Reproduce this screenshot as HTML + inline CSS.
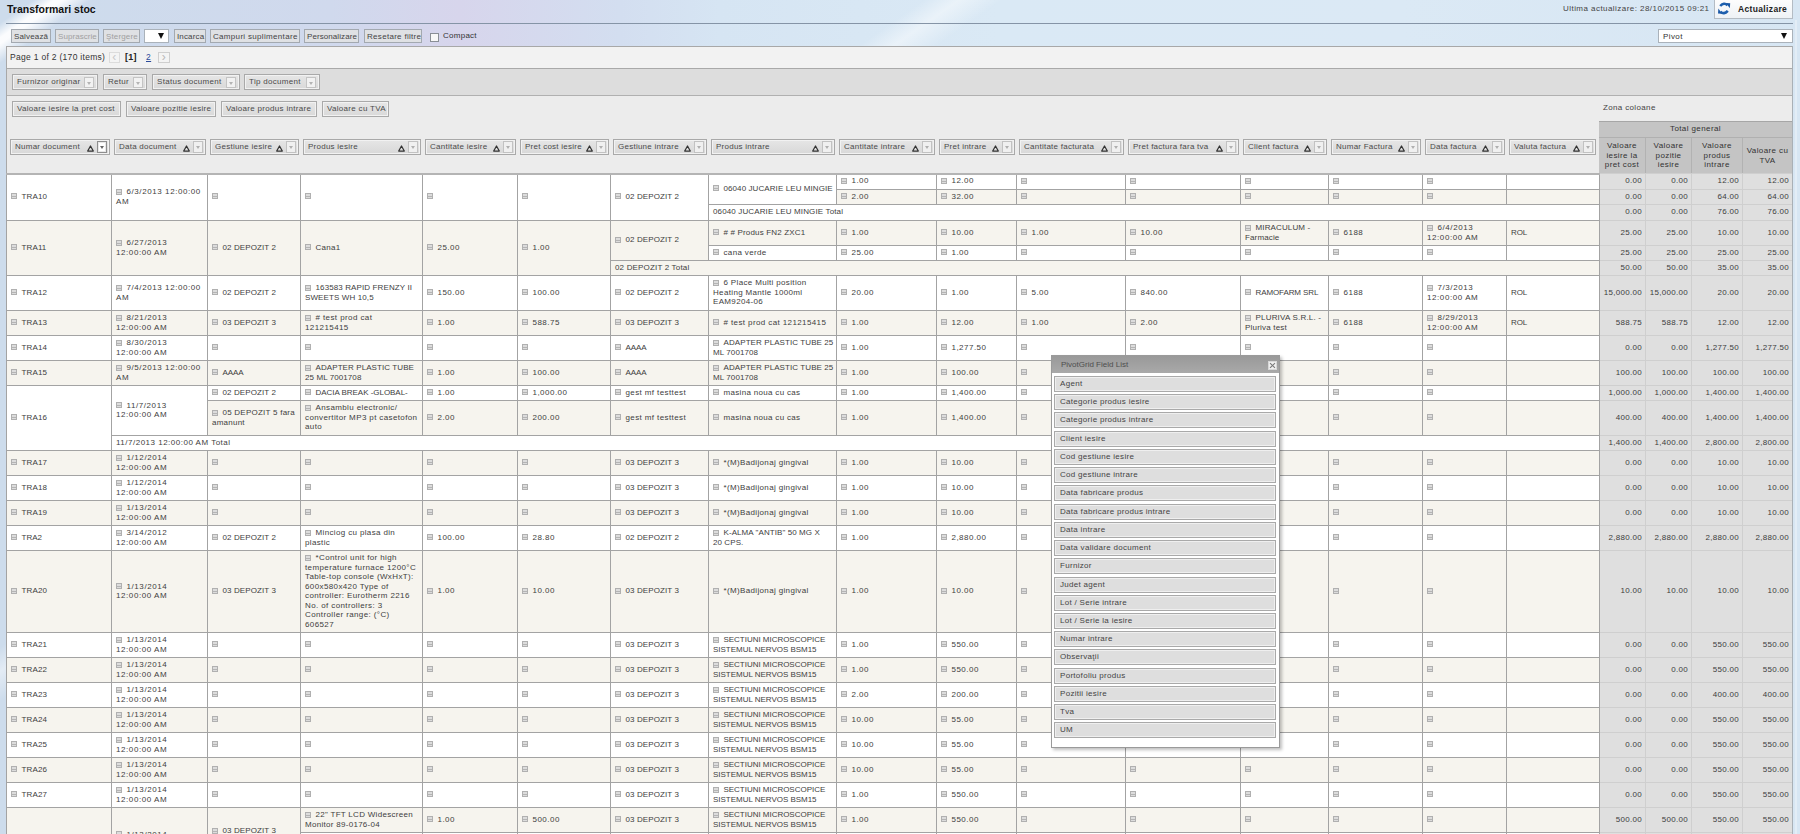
<!DOCTYPE html>
<html><head><meta charset="utf-8">
<style>
*{margin:0;padding:0;box-sizing:border-box}
html,body{width:1800px;height:834px;overflow:hidden}
body{position:relative;font-family:"Liberation Sans",sans-serif;color:#333;font-size:8px;letter-spacing:0.4px;
background:linear-gradient(145deg,rgba(255,255,255,0) 19px,rgba(255,255,255,0.92) 31px,rgba(255,255,255,0.92) 36px,rgba(255,255,255,0) 52px),linear-gradient(145deg,rgba(255,255,255,0) 530px,rgba(255,255,255,0.45) 550px,rgba(255,255,255,0) 575px),linear-gradient(90deg,#cddcec 0,#d0d9ed 330px,#d7d5ec 460px,#d3def0 620px,#d6e5f3 720px,#dae9f5 1000px,#dbe9f5 1400px,#d7e6f3 1800px)}
.abs{position:absolute}
#title{position:absolute;left:7px;top:3px;font-size:10.5px;font-weight:bold;color:#111;letter-spacing:0}
#tline{position:absolute;left:6px;top:23px;width:1787px;height:1px;background:#8594a6}
.tb{position:absolute;top:29px;height:14px;border:1px solid #a3a9b0;background:#dfe1e4;font-size:8px;line-height:13px;padding-left:2px;color:#444;white-space:nowrap;letter-spacing:0.12px;overflow:hidden}
.tb.dis{color:#a0a0a0}
#panel{position:absolute;left:6px;top:46px;width:1787px;height:800px;border:1px solid #a8a8a8;background:#ececec}
#pager{position:absolute;left:7px;top:47px;width:1785px;height:22px;background:#f2f2f2;border-bottom:1px solid #a9a9a9}
#filter{position:absolute;left:7px;top:69px;width:1785px;height:27px;background:#dddddd;border-bottom:1px solid #b0b0b0}
.fb{position:absolute;height:16px;border:1px solid #a9a9a9;background:linear-gradient(#e6e6e6,#d9d9d9);box-shadow:inset 0 0 0 1px #f2f2f2;font-size:8px;line-height:14px;padding-left:4px;white-space:nowrap;color:#4a4a4a;letter-spacing:0.3px}
.dd{position:absolute;right:3px;top:2px;width:10px;height:11px;border:1px solid #c4c4c4;background:#f2f2f2}
.dd:after{content:"";position:absolute;left:2px;top:4px;border-left:2.5px solid transparent;border-right:2.5px solid transparent;border-top:3px solid #b4b4b4}
.hb{position:absolute;top:139px;height:16px;border:1px solid #a9a9a9;background:linear-gradient(#e6e6e6,#d8d8d8);box-shadow:inset 0 0 0 1px #f2f2f2;font-size:8px;line-height:14px;padding-left:4px;white-space:nowrap;color:#4a4a4a;letter-spacing:0.25px}
.hb .dd{top:1px;height:12px;right:2px;width:10px;border-color:#c2c2c2;background:#f0f0f0}
.hb .dd:after{left:2px;top:4px;border-top-color:#b0b0b0}
.hb .dd.dk{border-color:#8e8e8e;background:#fff;box-shadow:inset 0 0 0 1px #e8e8e8}
.hb .dd.dk:after{border-top-color:#666;border-left-width:2.5px;border-right-width:2.5px;border-top-width:3px}
.hb .tri{right:15px;top:5px}
.tri{position:absolute;right:15px;top:4px;width:7px;height:7px}
#grid{position:absolute;left:6px;top:173px;width:1594px;height:661px;background:#a3a3a3}
#gtop{position:absolute;left:6px;top:173px;width:1594px;height:2px;background:#b4b4b4}
#tgrid{position:absolute;left:1600px;top:173px;width:192px;height:661px;background:#cfcfcf}
.c{position:absolute;display:flex;align-items:center;padding-left:4px;padding-bottom:1px;white-space:nowrap;overflow:hidden;line-height:9.5px;font-size:8px;color:#404040}
.c i{display:inline-block;width:6px;height:6px;border:1px solid #b0b0b0;background:#dcdcdc;margin-right:4.5px;position:relative;top:0px;vertical-align:-0.5px}
.c i:after{content:"";position:absolute;left:0;top:2px;width:4px;height:1px;background:#b4b4b4}
.t{position:absolute;background:#dfdfdf;text-align:right;padding-right:3px;padding-bottom:2px;display:flex;align-items:center;justify-content:flex-end;font-size:8px;color:#3d3d3d;white-space:nowrap;letter-spacing:0.3px}
#tgh{position:absolute;left:1599px;top:121px;width:193px;height:52px;background:#c4c4c4;border-top:1px solid #a6a6a6}
.tgh1{position:absolute;left:1599px;top:121px;width:193px;height:17px;border-bottom:1px solid #b0b0b0;text-align:center;line-height:16px;font-size:8px;color:#333;letter-spacing:0.4px}
.tgc{position:absolute;top:138px;height:35px;display:flex;align-items:center;justify-content:center;text-align:center;line-height:9.5px;font-size:8px;color:#333;border-right:1px solid #b2b2b2}
#popup{position:absolute;left:1051px;top:355px;width:229px;height:393px;background:#fff;border:1px solid #9a9a9a;box-shadow:2px 2px 3px rgba(0,0,0,0.25)}
#ptitle{position:absolute;left:0;top:0;width:227px;height:17px;background:linear-gradient(#999,#a9a9a9);color:#4e4e4e;font-size:8px;line-height:17px;padding-left:9px;letter-spacing:0}
#pclose{position:absolute;left:216px;top:5px;width:9px;height:9px;border:1px solid #d8d8d8;background:#f0f0f0}
#pclose:before,#pclose:after{content:"";position:absolute;left:0px;top:3px;width:7px;height:1px;background:#777;transform:rotate(45deg)}
#pclose:after{transform:rotate(-45deg)}
.pi{position:absolute;left:2px;width:222px;height:16px;border:1px solid #a9a9a9;background:#dedede;box-shadow:inset 0 0 0 1px #efefef;font-size:8px;line-height:14px;padding-left:5px;color:#444;letter-spacing:0.3px}
</style></head><body>
<div id="title">Transformari stoc</div>
<div id="tline"></div>
<div class="abs" style="left:1563px;top:4px;font-size:8px;color:#444;letter-spacing:0.45px;white-space:nowrap">Ultima actualizare: 28/10/2015 09:21</div>
<div class="abs" style="left:1714px;top:0px;width:79px;height:19px;background:linear-gradient(#fdfdfd,#eef2f6);border:1px solid #b4bcc4;border-top:none"></div>
<svg class="abs" style="left:1716px;top:0px" width="16" height="16" viewBox="0 0 16 16"><path d="M4.2 6 Q8 1.8 11.6 5.2" fill="none" stroke="#1d5fae" stroke-width="2.6"/><path d="M10 3 L14.2 3.2 L13.8 8.3 Z" fill="#1a58a6"/><path d="M11.8 10.8 Q8 15 4.4 11.6" fill="none" stroke="#1d5fae" stroke-width="2.6"/><path d="M6 13.8 L2.0 13.6 L2.4 8.6 Z" fill="#1a58a6"/></svg>
<div class="abs" style="left:1738px;top:4px;font-size:8.5px;font-weight:bold;color:#222;letter-spacing:0.35px">Actualizare</div>

<div class="tb" style="left:11px;width:40px;letter-spacing:0.16px">Salvează</div>
<div class="tb dis" style="left:55px;width:44px;letter-spacing:0.06px">Suprascrie</div>
<div class="tb dis" style="left:103px;width:37px;letter-spacing:0.14px">Ştergere</div>
<div class="abs" style="left:144px;top:29px;width:25px;height:14px;background:#fff;border:1px solid #aab2ba"></div>
<div class="abs" style="left:158px;top:33px;border-left:3px solid transparent;border-right:3px solid transparent;border-top:6px solid #111"></div>
<div class="tb" style="left:174px;width:32px;letter-spacing:0.15px">Incarca</div>
<div class="tb" style="left:210px;width:90px;letter-spacing:0.32px">Campuri suplimentare</div>
<div class="tb" style="left:304px;width:55px;letter-spacing:0.08px">Personalizare</div>
<div class="tb" style="left:364px;width:58px;letter-spacing:0.3px">Resetare filtre</div>
<div class="abs" style="left:430px;top:33px;width:9px;height:9px;border:1px solid #8a8f96;background:#f8f8f8"></div>
<div class="abs" style="left:443px;top:31px;font-size:8px;color:#333;letter-spacing:0.26px">Compact</div>
<div class="abs" style="left:1658px;top:29px;width:135px;height:14px;background:#fff;border:1px solid #aab2ba;font-size:8px;line-height:13px;padding-left:4px;color:#333">Pivot</div>
<div class="abs" style="left:1781px;top:33px;border-left:3px solid transparent;border-right:3px solid transparent;border-top:6px solid #111"></div>

<div id="panel"></div>
<div id="pager"></div>
<div class="abs" style="left:10px;top:52px;font-size:8.5px;color:#333;letter-spacing:0.3px;white-space:nowrap">Page 1 of 2 (170 items)</div>
<div class="abs" style="left:109px;top:52px;width:11px;height:11px;border:1px solid #dcdcdc;background:#f4f4f4;color:#c8c8c8;font-size:12px;line-height:9px;text-align:center">&lsaquo;</div>
<div class="abs" style="left:125px;top:52px;font-size:9px;font-weight:bold;color:#222;letter-spacing:0.3px">[1]</div>
<div class="abs" style="left:146px;top:52px;font-size:8.5px;color:#2a4a9a;text-decoration:underline">2</div>
<div class="abs" style="left:158px;top:52px;width:12px;height:11px;border:1px solid #cfcfcf;background:#f4f4f4;color:#b8b8b8;font-size:12px;line-height:9px;text-align:center">&rsaquo;</div>

<div id="filter"></div>
<div class="fb" style="left:12px;top:74px;width:86px">Furnizor originar<span class="dd"></span></div>
<div class="fb" style="left:103px;top:74px;width:44px">Retur<span class="dd"></span></div>
<div class="fb" style="left:152px;top:74px;width:88px">Status document<span class="dd"></span></div>
<div class="fb" style="left:244px;top:74px;width:76px">Tip document<span class="dd"></span></div>

<div class="fb" style="left:12px;top:101px;width:109px">Valoare iesire la pret cost</div>
<div class="fb" style="left:126px;top:101px;width:90px">Valoare pozitie iesire</div>
<div class="fb" style="left:221px;top:101px;width:96px">Valoare produs intrare</div>
<div class="fb" style="left:322px;top:101px;width:67px">Valoare cu TVA</div>
<div class="abs" style="left:1603px;top:103px;font-size:8px;color:#444;letter-spacing:0.35px">Zona coloane</div>

<div class="hb" style="left:10px;width:100px"><span class="ht">Numar document</span><svg class="tri" width="7" height="7"><path d="M3.5 1.0 L6.3 6.0 L0.7 6.0 Z" fill="none" stroke="#333" stroke-width="1.25" stroke-linejoin="round"/></svg><span class="dd dk"></span></div>
<div class="hb" style="left:114px;width:92px"><span class="ht">Data document</span><svg class="tri" width="7" height="7"><path d="M3.5 1.0 L6.3 6.0 L0.7 6.0 Z" fill="none" stroke="#333" stroke-width="1.25" stroke-linejoin="round"/></svg><span class="dd"></span></div>
<div class="hb" style="left:210px;width:89px"><span class="ht">Gestiune iesire</span><svg class="tri" width="7" height="7"><path d="M3.5 1.0 L6.3 6.0 L0.7 6.0 Z" fill="none" stroke="#333" stroke-width="1.25" stroke-linejoin="round"/></svg><span class="dd"></span></div>
<div class="hb" style="left:303px;width:118px"><span class="ht">Produs iesire</span><svg class="tri" width="7" height="7"><path d="M3.5 1.0 L6.3 6.0 L0.7 6.0 Z" fill="none" stroke="#333" stroke-width="1.25" stroke-linejoin="round"/></svg><span class="dd"></span></div>
<div class="hb" style="left:425px;width:91px"><span class="ht">Cantitate iesire</span><svg class="tri" width="7" height="7"><path d="M3.5 1.0 L6.3 6.0 L0.7 6.0 Z" fill="none" stroke="#333" stroke-width="1.25" stroke-linejoin="round"/></svg><span class="dd"></span></div>
<div class="hb" style="left:520px;width:89px"><span class="ht">Pret cost iesire</span><svg class="tri" width="7" height="7"><path d="M3.5 1.0 L6.3 6.0 L0.7 6.0 Z" fill="none" stroke="#333" stroke-width="1.25" stroke-linejoin="round"/></svg><span class="dd"></span></div>
<div class="hb" style="left:613px;width:94px"><span class="ht">Gestiune intrare</span><svg class="tri" width="7" height="7"><path d="M3.5 1.0 L6.3 6.0 L0.7 6.0 Z" fill="none" stroke="#333" stroke-width="1.25" stroke-linejoin="round"/></svg><span class="dd"></span></div>
<div class="hb" style="left:711px;width:124px"><span class="ht">Produs intrare</span><svg class="tri" width="7" height="7"><path d="M3.5 1.0 L6.3 6.0 L0.7 6.0 Z" fill="none" stroke="#333" stroke-width="1.25" stroke-linejoin="round"/></svg><span class="dd"></span></div>
<div class="hb" style="left:839px;width:96px"><span class="ht">Cantitate intrare</span><svg class="tri" width="7" height="7"><path d="M3.5 1.0 L6.3 6.0 L0.7 6.0 Z" fill="none" stroke="#333" stroke-width="1.25" stroke-linejoin="round"/></svg><span class="dd"></span></div>
<div class="hb" style="left:939px;width:76px"><span class="ht">Pret intrare</span><svg class="tri" width="7" height="7"><path d="M3.5 1.0 L6.3 6.0 L0.7 6.0 Z" fill="none" stroke="#333" stroke-width="1.25" stroke-linejoin="round"/></svg><span class="dd"></span></div>
<div class="hb" style="left:1019px;width:105px"><span class="ht">Cantitate facturata</span><svg class="tri" width="7" height="7"><path d="M3.5 1.0 L6.3 6.0 L0.7 6.0 Z" fill="none" stroke="#333" stroke-width="1.25" stroke-linejoin="round"/></svg><span class="dd"></span></div>
<div class="hb" style="left:1128px;width:111px"><span class="ht">Pret factura fara tva</span><svg class="tri" width="7" height="7"><path d="M3.5 1.0 L6.3 6.0 L0.7 6.0 Z" fill="none" stroke="#333" stroke-width="1.25" stroke-linejoin="round"/></svg><span class="dd"></span></div>
<div class="hb" style="left:1243px;width:84px"><span class="ht">Client factura</span><svg class="tri" width="7" height="7"><path d="M3.5 1.0 L6.3 6.0 L0.7 6.0 Z" fill="none" stroke="#333" stroke-width="1.25" stroke-linejoin="round"/></svg><span class="dd"></span></div>
<div class="hb" style="left:1331px;width:90px"><span class="ht">Numar Factura</span><svg class="tri" width="7" height="7"><path d="M3.5 1.0 L6.3 6.0 L0.7 6.0 Z" fill="none" stroke="#333" stroke-width="1.25" stroke-linejoin="round"/></svg><span class="dd"></span></div>
<div class="hb" style="left:1425px;width:80px"><span class="ht">Data factura</span><svg class="tri" width="7" height="7"><path d="M3.5 1.0 L6.3 6.0 L0.7 6.0 Z" fill="none" stroke="#333" stroke-width="1.25" stroke-linejoin="round"/></svg><span class="dd"></span></div>
<div class="hb" style="left:1509px;width:87px"><span class="ht">Valuta factura</span><svg class="tri" width="7" height="7"><path d="M3.5 1.0 L6.3 6.0 L0.7 6.0 Z" fill="none" stroke="#333" stroke-width="1.25" stroke-linejoin="round"/></svg><span class="dd"></span></div>

<div id="tgh"></div>
<div class="tgh1">Total general</div>
<div class="tgc" style="left:1599px;width:47px">Valoare<br>iesire la<br>pret cost</div>
<div class="tgc" style="left:1646px;width:46px">Valoare<br>pozitie<br>iesire</div>
<div class="tgc" style="left:1692px;width:51px">Valoare<br>produs<br>intrare</div>
<div class="tgc" style="left:1743px;width:49px;border-right:none">Valoare cu<br>TVA</div>

<div id="grid"></div>
<div id="tgrid"></div>
<div class="c" style="left:7px;top:174px;width:104px;height:46px;background:#ffffff;letter-spacing:0.128px"><span><i></i>TRA10</span></div>
<div class="c" style="left:112px;top:174px;width:95px;height:46px;background:#ffffff;letter-spacing:0.582px"><span><i></i>6/3/2013 12:00:00<br>AM</span></div>
<div class="c" style="left:208px;top:174px;width:92px;height:46px;background:#ffffff;letter-spacing:0.4px"><span><i></i></span></div>
<div class="c" style="left:301px;top:174px;width:121px;height:46px;background:#ffffff;letter-spacing:0.4px"><span><i></i></span></div>
<div class="c" style="left:423px;top:174px;width:94px;height:46px;background:#ffffff;letter-spacing:0.4px"><span><i></i></span></div>
<div class="c" style="left:518px;top:174px;width:92px;height:46px;background:#ffffff;letter-spacing:0.4px"><span><i></i></span></div>
<div class="c" style="left:611px;top:174px;width:97px;height:46px;background:#ffffff;letter-spacing:0.107px"><span><i></i>02 DEPOZIT 2</span></div>
<div class="c" style="left:709px;top:174px;width:127px;height:30px;background:#ffffff;letter-spacing:0.089px"><span><i></i>06040 JUCARIE LEU MINGIE</span></div>
<div class="c" style="left:837px;top:174px;width:99px;height:15px;background:#ffffff;letter-spacing:0.475px"><span><i></i>1.00</span></div>
<div class="c" style="left:837px;top:190px;width:99px;height:14px;background:#f6f4ee;letter-spacing:0.475px"><span><i></i>2.00</span></div>
<div class="c" style="left:937px;top:174px;width:79px;height:15px;background:#ffffff;letter-spacing:0.48px"><span><i></i>12.00</span></div>
<div class="c" style="left:937px;top:190px;width:79px;height:14px;background:#f6f4ee;letter-spacing:0.48px"><span><i></i>32.00</span></div>
<div class="c" style="left:1017px;top:174px;width:108px;height:15px;background:#ffffff;letter-spacing:0.4px"><span><i></i></span></div>
<div class="c" style="left:1017px;top:190px;width:108px;height:14px;background:#f6f4ee;letter-spacing:0.4px"><span><i></i></span></div>
<div class="c" style="left:1126px;top:174px;width:114px;height:15px;background:#ffffff;letter-spacing:0.4px"><span><i></i></span></div>
<div class="c" style="left:1126px;top:190px;width:114px;height:14px;background:#f6f4ee;letter-spacing:0.4px"><span><i></i></span></div>
<div class="c" style="left:1241px;top:174px;width:87px;height:15px;background:#ffffff;letter-spacing:0.4px"><span><i></i></span></div>
<div class="c" style="left:1241px;top:190px;width:87px;height:14px;background:#f6f4ee;letter-spacing:0.4px"><span><i></i></span></div>
<div class="c" style="left:1329px;top:174px;width:93px;height:15px;background:#ffffff;letter-spacing:0.4px"><span><i></i></span></div>
<div class="c" style="left:1329px;top:190px;width:93px;height:14px;background:#f6f4ee;letter-spacing:0.4px"><span><i></i></span></div>
<div class="c" style="left:1423px;top:174px;width:83px;height:15px;background:#ffffff;letter-spacing:0.4px"><span><i></i></span></div>
<div class="c" style="left:1423px;top:190px;width:83px;height:14px;background:#f6f4ee;letter-spacing:0.4px"><span><i></i></span></div>
<div class="c" style="left:1507px;top:174px;width:92px;height:15px;background:#ffffff;letter-spacing:0.4px"><span></span></div>
<div class="c" style="left:1507px;top:190px;width:92px;height:14px;background:#f6f4ee;letter-spacing:0.4px"><span></span></div>
<div class="c" style="left:709px;top:205px;width:890px;height:15px;background:#ffffff;letter-spacing:0.131px"><span>06040 JUCARIE LEU MINGIE Total</span></div>
<div class="t" style="left:1600px;top:174px;width:45px;height:15px">0.00</div>
<div class="t" style="left:1646px;top:174px;width:45px;height:15px">0.00</div>
<div class="t" style="left:1692px;top:174px;width:50px;height:15px">12.00</div>
<div class="t" style="left:1743px;top:174px;width:49px;height:15px">12.00</div>
<div class="t" style="left:1600px;top:190px;width:45px;height:14px">0.00</div>
<div class="t" style="left:1646px;top:190px;width:45px;height:14px">0.00</div>
<div class="t" style="left:1692px;top:190px;width:50px;height:14px">64.00</div>
<div class="t" style="left:1743px;top:190px;width:49px;height:14px">64.00</div>
<div class="t" style="left:1600px;top:205px;width:45px;height:15px">0.00</div>
<div class="t" style="left:1646px;top:205px;width:45px;height:15px">0.00</div>
<div class="t" style="left:1692px;top:205px;width:50px;height:15px">76.00</div>
<div class="t" style="left:1743px;top:205px;width:49px;height:15px">76.00</div>
<div class="c" style="left:7px;top:221px;width:104px;height:54px;background:#f6f4ee;letter-spacing:0.128px"><span><i></i>TRA11</span></div>
<div class="c" style="left:112px;top:221px;width:95px;height:54px;background:#f6f4ee;letter-spacing:0.578px"><span><i></i>6/27/2013<br>12:00:00 AM</span></div>
<div class="c" style="left:208px;top:221px;width:92px;height:54px;background:#f6f4ee;letter-spacing:0.107px"><span><i></i>02 DEPOZIT 2</span></div>
<div class="c" style="left:301px;top:221px;width:121px;height:54px;background:#f6f4ee;letter-spacing:0.286px"><span><i></i>Cana1</span></div>
<div class="c" style="left:423px;top:221px;width:94px;height:54px;background:#f6f4ee;letter-spacing:0.48px"><span><i></i>25.00</span></div>
<div class="c" style="left:518px;top:221px;width:92px;height:54px;background:#f6f4ee;letter-spacing:0.475px"><span><i></i>1.00</span></div>
<div class="c" style="left:611px;top:221px;width:97px;height:39px;background:#f6f4ee;letter-spacing:0.107px"><span><i></i>02 DEPOZIT 2</span></div>
<div class="c" style="left:709px;top:221px;width:127px;height:24px;background:#f6f4ee;letter-spacing:0.17px"><span><i></i># # Produs FN2 ZXC1</span></div>
<div class="c" style="left:709px;top:246px;width:127px;height:14px;background:#ffffff;letter-spacing:0.345px"><span><i></i>cana verde</span></div>
<div class="c" style="left:837px;top:221px;width:99px;height:24px;background:#f6f4ee;letter-spacing:0.475px"><span><i></i>1.00</span></div>
<div class="c" style="left:837px;top:246px;width:99px;height:14px;background:#ffffff;letter-spacing:0.48px"><span><i></i>25.00</span></div>
<div class="c" style="left:937px;top:221px;width:79px;height:24px;background:#f6f4ee;letter-spacing:0.48px"><span><i></i>10.00</span></div>
<div class="c" style="left:937px;top:246px;width:79px;height:14px;background:#ffffff;letter-spacing:0.475px"><span><i></i>1.00</span></div>
<div class="c" style="left:1017px;top:221px;width:108px;height:24px;background:#f6f4ee;letter-spacing:0.475px"><span><i></i>1.00</span></div>
<div class="c" style="left:1017px;top:246px;width:108px;height:14px;background:#ffffff;letter-spacing:0.4px"><span><i></i></span></div>
<div class="c" style="left:1126px;top:221px;width:114px;height:24px;background:#f6f4ee;letter-spacing:0.48px"><span><i></i>10.00</span></div>
<div class="c" style="left:1126px;top:246px;width:114px;height:14px;background:#ffffff;letter-spacing:0.4px"><span><i></i></span></div>
<div class="c" style="left:1241px;top:221px;width:87px;height:24px;background:#f6f4ee;letter-spacing:0.13px"><span><i></i>MIRACULUM -<br>Farmacie</span></div>
<div class="c" style="left:1241px;top:246px;width:87px;height:14px;background:#ffffff;letter-spacing:0.4px"><span><i></i></span></div>
<div class="c" style="left:1329px;top:221px;width:93px;height:24px;background:#f6f4ee;letter-spacing:0.5px"><span><i></i>6188</span></div>
<div class="c" style="left:1329px;top:246px;width:93px;height:14px;background:#ffffff;letter-spacing:0.4px"><span><i></i></span></div>
<div class="c" style="left:1423px;top:221px;width:83px;height:24px;background:#f6f4ee;letter-spacing:0.582px"><span><i></i>6/4/2013<br>12:00:00 AM</span></div>
<div class="c" style="left:1423px;top:246px;width:83px;height:14px;background:#ffffff;letter-spacing:0.4px"><span><i></i></span></div>
<div class="c" style="left:1507px;top:221px;width:92px;height:24px;background:#f6f4ee;letter-spacing:-0.12px"><span>ROL</span></div>
<div class="c" style="left:1507px;top:246px;width:92px;height:14px;background:#ffffff;letter-spacing:0.4px"><span></span></div>
<div class="c" style="left:611px;top:261px;width:988px;height:14px;background:#f6f4ee;letter-spacing:0.17px"><span>02 DEPOZIT 2 Total</span></div>
<div class="t" style="left:1600px;top:221px;width:45px;height:24px">25.00</div>
<div class="t" style="left:1646px;top:221px;width:45px;height:24px">25.00</div>
<div class="t" style="left:1692px;top:221px;width:50px;height:24px">10.00</div>
<div class="t" style="left:1743px;top:221px;width:49px;height:24px">10.00</div>
<div class="t" style="left:1600px;top:246px;width:45px;height:14px">25.00</div>
<div class="t" style="left:1646px;top:246px;width:45px;height:14px">25.00</div>
<div class="t" style="left:1692px;top:246px;width:50px;height:14px">25.00</div>
<div class="t" style="left:1743px;top:246px;width:49px;height:14px">25.00</div>
<div class="t" style="left:1600px;top:261px;width:45px;height:14px">50.00</div>
<div class="t" style="left:1646px;top:261px;width:45px;height:14px">50.00</div>
<div class="t" style="left:1692px;top:261px;width:50px;height:14px">35.00</div>
<div class="t" style="left:1743px;top:261px;width:49px;height:14px">35.00</div>
<div class="c" style="left:7px;top:276px;width:104px;height:34px;background:#ffffff;letter-spacing:0.128px"><span><i></i>TRA12</span></div>
<div class="c" style="left:112px;top:276px;width:95px;height:34px;background:#ffffff;letter-spacing:0.582px"><span><i></i>7/4/2013 12:00:00<br>AM</span></div>
<div class="c" style="left:208px;top:276px;width:92px;height:34px;background:#ffffff;letter-spacing:0.107px"><span><i></i>02 DEPOZIT 2</span></div>
<div class="c" style="left:301px;top:276px;width:121px;height:34px;background:#ffffff;letter-spacing:0.115px"><span><i></i>163583 RAPID FRENZY II<br>SWEETS WH 10,5</span></div>
<div class="c" style="left:423px;top:276px;width:94px;height:34px;background:#ffffff;letter-spacing:0.483px"><span><i></i>150.00</span></div>
<div class="c" style="left:518px;top:276px;width:92px;height:34px;background:#ffffff;letter-spacing:0.483px"><span><i></i>100.00</span></div>
<div class="c" style="left:611px;top:276px;width:97px;height:34px;background:#ffffff;letter-spacing:0.107px"><span><i></i>02 DEPOZIT 2</span></div>
<div class="c" style="left:709px;top:276px;width:127px;height:34px;background:#ffffff;letter-spacing:0.34px"><span><i></i>6 Place Multi position<br>Heating Mantle 1000ml<br>EAM9204-06</span></div>
<div class="c" style="left:837px;top:276px;width:99px;height:34px;background:#ffffff;letter-spacing:0.48px"><span><i></i>20.00</span></div>
<div class="c" style="left:937px;top:276px;width:79px;height:34px;background:#ffffff;letter-spacing:0.475px"><span><i></i>1.00</span></div>
<div class="c" style="left:1017px;top:276px;width:108px;height:34px;background:#ffffff;letter-spacing:0.475px"><span><i></i>5.00</span></div>
<div class="c" style="left:1126px;top:276px;width:114px;height:34px;background:#ffffff;letter-spacing:0.483px"><span><i></i>840.00</span></div>
<div class="c" style="left:1241px;top:276px;width:87px;height:34px;background:#ffffff;letter-spacing:-0.102px"><span><i></i>RAMOFARM SRL</span></div>
<div class="c" style="left:1329px;top:276px;width:93px;height:34px;background:#ffffff;letter-spacing:0.5px"><span><i></i>6188</span></div>
<div class="c" style="left:1423px;top:276px;width:83px;height:34px;background:#ffffff;letter-spacing:0.582px"><span><i></i>7/3/2013<br>12:00:00 AM</span></div>
<div class="c" style="left:1507px;top:276px;width:92px;height:34px;background:#ffffff;letter-spacing:-0.12px"><span>ROL</span></div>
<div class="t" style="left:1600px;top:276px;width:45px;height:34px">15,000.00</div>
<div class="t" style="left:1646px;top:276px;width:45px;height:34px">15,000.00</div>
<div class="t" style="left:1692px;top:276px;width:50px;height:34px">20.00</div>
<div class="t" style="left:1743px;top:276px;width:49px;height:34px">20.00</div>
<div class="c" style="left:7px;top:311px;width:104px;height:24px;background:#f6f4ee;letter-spacing:0.128px"><span><i></i>TRA13</span></div>
<div class="c" style="left:112px;top:311px;width:95px;height:24px;background:#f6f4ee;letter-spacing:0.578px"><span><i></i>8/21/2013<br>12:00:00 AM</span></div>
<div class="c" style="left:208px;top:311px;width:92px;height:24px;background:#f6f4ee;letter-spacing:0.107px"><span><i></i>03 DEPOZIT 3</span></div>
<div class="c" style="left:301px;top:311px;width:121px;height:24px;background:#f6f4ee;letter-spacing:0.406px"><span><i></i># test prod cat<br>121215415</span></div>
<div class="c" style="left:423px;top:311px;width:94px;height:24px;background:#f6f4ee;letter-spacing:0.475px"><span><i></i>1.00</span></div>
<div class="c" style="left:518px;top:311px;width:92px;height:24px;background:#f6f4ee;letter-spacing:0.483px"><span><i></i>588.75</span></div>
<div class="c" style="left:611px;top:311px;width:97px;height:24px;background:#f6f4ee;letter-spacing:0.107px"><span><i></i>03 DEPOZIT 3</span></div>
<div class="c" style="left:709px;top:311px;width:127px;height:24px;background:#f6f4ee;letter-spacing:0.394px"><span><i></i># test prod cat 121215415</span></div>
<div class="c" style="left:837px;top:311px;width:99px;height:24px;background:#f6f4ee;letter-spacing:0.475px"><span><i></i>1.00</span></div>
<div class="c" style="left:937px;top:311px;width:79px;height:24px;background:#f6f4ee;letter-spacing:0.48px"><span><i></i>12.00</span></div>
<div class="c" style="left:1017px;top:311px;width:108px;height:24px;background:#f6f4ee;letter-spacing:0.475px"><span><i></i>1.00</span></div>
<div class="c" style="left:1126px;top:311px;width:114px;height:24px;background:#f6f4ee;letter-spacing:0.475px"><span><i></i>2.00</span></div>
<div class="c" style="left:1241px;top:311px;width:87px;height:24px;background:#f6f4ee;letter-spacing:0.193px"><span><i></i>PLURIVA S.R.L. -<br>Pluriva test</span></div>
<div class="c" style="left:1329px;top:311px;width:93px;height:24px;background:#f6f4ee;letter-spacing:0.5px"><span><i></i>6188</span></div>
<div class="c" style="left:1423px;top:311px;width:83px;height:24px;background:#f6f4ee;letter-spacing:0.578px"><span><i></i>8/29/2013<br>12:00:00 AM</span></div>
<div class="c" style="left:1507px;top:311px;width:92px;height:24px;background:#f6f4ee;letter-spacing:-0.12px"><span>ROL</span></div>
<div class="t" style="left:1600px;top:311px;width:45px;height:24px">588.75</div>
<div class="t" style="left:1646px;top:311px;width:45px;height:24px">588.75</div>
<div class="t" style="left:1692px;top:311px;width:50px;height:24px">12.00</div>
<div class="t" style="left:1743px;top:311px;width:49px;height:24px">12.00</div>
<div class="c" style="left:7px;top:336px;width:104px;height:24px;background:#ffffff;letter-spacing:0.128px"><span><i></i>TRA14</span></div>
<div class="c" style="left:112px;top:336px;width:95px;height:24px;background:#ffffff;letter-spacing:0.578px"><span><i></i>8/30/2013<br>12:00:00 AM</span></div>
<div class="c" style="left:208px;top:336px;width:92px;height:24px;background:#ffffff;letter-spacing:0.4px"><span><i></i></span></div>
<div class="c" style="left:301px;top:336px;width:121px;height:24px;background:#ffffff;letter-spacing:0.4px"><span><i></i></span></div>
<div class="c" style="left:423px;top:336px;width:94px;height:24px;background:#ffffff;letter-spacing:0.4px"><span><i></i></span></div>
<div class="c" style="left:518px;top:336px;width:92px;height:24px;background:#ffffff;letter-spacing:0.4px"><span><i></i></span></div>
<div class="c" style="left:611px;top:336px;width:97px;height:24px;background:#ffffff;letter-spacing:-0.12px"><span><i></i>AAAA</span></div>
<div class="c" style="left:709px;top:336px;width:127px;height:24px;background:#ffffff;letter-spacing:0.088px"><span><i></i>ADAPTER PLASTIC TUBE 25<br>ML 7001708</span></div>
<div class="c" style="left:837px;top:336px;width:99px;height:24px;background:#ffffff;letter-spacing:0.475px"><span><i></i>1.00</span></div>
<div class="c" style="left:937px;top:336px;width:79px;height:24px;background:#ffffff;letter-spacing:0.475px"><span><i></i>1,277.50</span></div>
<div class="c" style="left:1017px;top:336px;width:108px;height:24px;background:#ffffff;letter-spacing:0.4px"><span><i></i></span></div>
<div class="c" style="left:1126px;top:336px;width:114px;height:24px;background:#ffffff;letter-spacing:0.4px"><span><i></i></span></div>
<div class="c" style="left:1241px;top:336px;width:87px;height:24px;background:#ffffff;letter-spacing:0.4px"><span><i></i></span></div>
<div class="c" style="left:1329px;top:336px;width:93px;height:24px;background:#ffffff;letter-spacing:0.4px"><span><i></i></span></div>
<div class="c" style="left:1423px;top:336px;width:83px;height:24px;background:#ffffff;letter-spacing:0.4px"><span><i></i></span></div>
<div class="c" style="left:1507px;top:336px;width:92px;height:24px;background:#ffffff;letter-spacing:0.4px"><span></span></div>
<div class="t" style="left:1600px;top:336px;width:45px;height:24px">0.00</div>
<div class="t" style="left:1646px;top:336px;width:45px;height:24px">0.00</div>
<div class="t" style="left:1692px;top:336px;width:50px;height:24px">1,277.50</div>
<div class="t" style="left:1743px;top:336px;width:49px;height:24px">1,277.50</div>
<div class="c" style="left:7px;top:361px;width:104px;height:24px;background:#f6f4ee;letter-spacing:0.128px"><span><i></i>TRA15</span></div>
<div class="c" style="left:112px;top:361px;width:95px;height:24px;background:#f6f4ee;letter-spacing:0.582px"><span><i></i>9/5/2013 12:00:00<br>AM</span></div>
<div class="c" style="left:208px;top:361px;width:92px;height:24px;background:#f6f4ee;letter-spacing:-0.12px"><span><i></i>AAAA</span></div>
<div class="c" style="left:301px;top:361px;width:121px;height:24px;background:#f6f4ee;letter-spacing:0.088px"><span><i></i>ADAPTER PLASTIC TUBE<br>25 ML 7001708</span></div>
<div class="c" style="left:423px;top:361px;width:94px;height:24px;background:#f6f4ee;letter-spacing:0.475px"><span><i></i>1.00</span></div>
<div class="c" style="left:518px;top:361px;width:92px;height:24px;background:#f6f4ee;letter-spacing:0.483px"><span><i></i>100.00</span></div>
<div class="c" style="left:611px;top:361px;width:97px;height:24px;background:#f6f4ee;letter-spacing:-0.12px"><span><i></i>AAAA</span></div>
<div class="c" style="left:709px;top:361px;width:127px;height:24px;background:#f6f4ee;letter-spacing:0.088px"><span><i></i>ADAPTER PLASTIC TUBE 25<br>ML 7001708</span></div>
<div class="c" style="left:837px;top:361px;width:99px;height:24px;background:#f6f4ee;letter-spacing:0.475px"><span><i></i>1.00</span></div>
<div class="c" style="left:937px;top:361px;width:79px;height:24px;background:#f6f4ee;letter-spacing:0.483px"><span><i></i>100.00</span></div>
<div class="c" style="left:1017px;top:361px;width:108px;height:24px;background:#f6f4ee;letter-spacing:0.4px"><span><i></i></span></div>
<div class="c" style="left:1126px;top:361px;width:114px;height:24px;background:#f6f4ee;letter-spacing:0.4px"><span><i></i></span></div>
<div class="c" style="left:1241px;top:361px;width:87px;height:24px;background:#f6f4ee;letter-spacing:0.4px"><span><i></i></span></div>
<div class="c" style="left:1329px;top:361px;width:93px;height:24px;background:#f6f4ee;letter-spacing:0.4px"><span><i></i></span></div>
<div class="c" style="left:1423px;top:361px;width:83px;height:24px;background:#f6f4ee;letter-spacing:0.4px"><span><i></i></span></div>
<div class="c" style="left:1507px;top:361px;width:92px;height:24px;background:#f6f4ee;letter-spacing:0.4px"><span></span></div>
<div class="t" style="left:1600px;top:361px;width:45px;height:24px">100.00</div>
<div class="t" style="left:1646px;top:361px;width:45px;height:24px">100.00</div>
<div class="t" style="left:1692px;top:361px;width:50px;height:24px">100.00</div>
<div class="t" style="left:1743px;top:361px;width:49px;height:24px">100.00</div>
<div class="c" style="left:7px;top:386px;width:104px;height:64px;background:#ffffff;letter-spacing:0.128px"><span><i></i>TRA16</span></div>
<div class="c" style="left:112px;top:386px;width:95px;height:49px;background:#ffffff;letter-spacing:0.578px"><span><i></i>11/7/2013<br>12:00:00 AM</span></div>
<div class="c" style="left:208px;top:386px;width:92px;height:14px;background:#ffffff;letter-spacing:0.107px"><span><i></i>02 DEPOZIT 2</span></div>
<div class="c" style="left:208px;top:401px;width:92px;height:34px;background:#f6f4ee;letter-spacing:0.243px"><span><i></i>05 DEPOZIT 5 fara<br>amanunt</span></div>
<div class="c" style="left:301px;top:386px;width:121px;height:14px;background:#ffffff;letter-spacing:-0.035px"><span><i></i>DACIA BREAK -GLOBAL-</span></div>
<div class="c" style="left:301px;top:401px;width:121px;height:34px;background:#f6f4ee;letter-spacing:0.379px"><span><i></i>Ansamblu electronic/<br>convertitor MP3 pt casetofon<br>auto</span></div>
<div class="c" style="left:423px;top:386px;width:94px;height:14px;background:#ffffff;letter-spacing:0.475px"><span><i></i>1.00</span></div>
<div class="c" style="left:423px;top:401px;width:94px;height:34px;background:#f6f4ee;letter-spacing:0.475px"><span><i></i>2.00</span></div>
<div class="c" style="left:518px;top:386px;width:92px;height:14px;background:#ffffff;letter-spacing:0.475px"><span><i></i>1,000.00</span></div>
<div class="c" style="left:518px;top:401px;width:92px;height:34px;background:#f6f4ee;letter-spacing:0.483px"><span><i></i>200.00</span></div>
<div class="c" style="left:611px;top:386px;width:97px;height:14px;background:#ffffff;letter-spacing:0.394px"><span><i></i>gest mf testtest</span></div>
<div class="c" style="left:611px;top:401px;width:97px;height:34px;background:#f6f4ee;letter-spacing:0.394px"><span><i></i>gest mf testtest</span></div>
<div class="c" style="left:709px;top:386px;width:127px;height:14px;background:#ffffff;letter-spacing:0.319px"><span><i></i>masina noua cu cas</span></div>
<div class="c" style="left:709px;top:401px;width:127px;height:34px;background:#f6f4ee;letter-spacing:0.319px"><span><i></i>masina noua cu cas</span></div>
<div class="c" style="left:837px;top:386px;width:99px;height:14px;background:#ffffff;letter-spacing:0.475px"><span><i></i>1.00</span></div>
<div class="c" style="left:837px;top:401px;width:99px;height:34px;background:#f6f4ee;letter-spacing:0.475px"><span><i></i>1.00</span></div>
<div class="c" style="left:937px;top:386px;width:79px;height:14px;background:#ffffff;letter-spacing:0.475px"><span><i></i>1,400.00</span></div>
<div class="c" style="left:937px;top:401px;width:79px;height:34px;background:#f6f4ee;letter-spacing:0.475px"><span><i></i>1,400.00</span></div>
<div class="c" style="left:1017px;top:386px;width:108px;height:14px;background:#ffffff;letter-spacing:0.4px"><span><i></i></span></div>
<div class="c" style="left:1017px;top:401px;width:108px;height:34px;background:#f6f4ee;letter-spacing:0.4px"><span><i></i></span></div>
<div class="c" style="left:1126px;top:386px;width:114px;height:14px;background:#ffffff;letter-spacing:0.4px"><span><i></i></span></div>
<div class="c" style="left:1126px;top:401px;width:114px;height:34px;background:#f6f4ee;letter-spacing:0.4px"><span><i></i></span></div>
<div class="c" style="left:1241px;top:386px;width:87px;height:14px;background:#ffffff;letter-spacing:0.4px"><span><i></i></span></div>
<div class="c" style="left:1241px;top:401px;width:87px;height:34px;background:#f6f4ee;letter-spacing:0.4px"><span><i></i></span></div>
<div class="c" style="left:1329px;top:386px;width:93px;height:14px;background:#ffffff;letter-spacing:0.4px"><span><i></i></span></div>
<div class="c" style="left:1329px;top:401px;width:93px;height:34px;background:#f6f4ee;letter-spacing:0.4px"><span><i></i></span></div>
<div class="c" style="left:1423px;top:386px;width:83px;height:14px;background:#ffffff;letter-spacing:0.4px"><span><i></i></span></div>
<div class="c" style="left:1423px;top:401px;width:83px;height:34px;background:#f6f4ee;letter-spacing:0.4px"><span><i></i></span></div>
<div class="c" style="left:1507px;top:386px;width:92px;height:14px;background:#ffffff;letter-spacing:0.4px"><span></span></div>
<div class="c" style="left:1507px;top:401px;width:92px;height:34px;background:#f6f4ee;letter-spacing:0.4px"><span></span></div>
<div class="c" style="left:112px;top:436px;width:1487px;height:14px;background:#ffffff;letter-spacing:0.498px"><span>11/7/2013 12:00:00 AM Total</span></div>
<div class="t" style="left:1600px;top:386px;width:45px;height:14px">1,000.00</div>
<div class="t" style="left:1646px;top:386px;width:45px;height:14px">1,000.00</div>
<div class="t" style="left:1692px;top:386px;width:50px;height:14px">1,400.00</div>
<div class="t" style="left:1743px;top:386px;width:49px;height:14px">1,400.00</div>
<div class="t" style="left:1600px;top:401px;width:45px;height:34px">400.00</div>
<div class="t" style="left:1646px;top:401px;width:45px;height:34px">400.00</div>
<div class="t" style="left:1692px;top:401px;width:50px;height:34px">1,400.00</div>
<div class="t" style="left:1743px;top:401px;width:49px;height:34px">1,400.00</div>
<div class="t" style="left:1600px;top:436px;width:45px;height:14px">1,400.00</div>
<div class="t" style="left:1646px;top:436px;width:45px;height:14px">1,400.00</div>
<div class="t" style="left:1692px;top:436px;width:50px;height:14px">2,800.00</div>
<div class="t" style="left:1743px;top:436px;width:49px;height:14px">2,800.00</div>
<div class="c" style="left:7px;top:451px;width:104px;height:24px;background:#f6f4ee;letter-spacing:0.128px"><span><i></i>TRA17</span></div>
<div class="c" style="left:112px;top:451px;width:95px;height:24px;background:#f6f4ee;letter-spacing:0.578px"><span><i></i>1/12/2014<br>12:00:00 AM</span></div>
<div class="c" style="left:208px;top:451px;width:92px;height:24px;background:#f6f4ee;letter-spacing:0.4px"><span><i></i></span></div>
<div class="c" style="left:301px;top:451px;width:121px;height:24px;background:#f6f4ee;letter-spacing:0.4px"><span><i></i></span></div>
<div class="c" style="left:423px;top:451px;width:94px;height:24px;background:#f6f4ee;letter-spacing:0.4px"><span><i></i></span></div>
<div class="c" style="left:518px;top:451px;width:92px;height:24px;background:#f6f4ee;letter-spacing:0.4px"><span><i></i></span></div>
<div class="c" style="left:611px;top:451px;width:97px;height:24px;background:#f6f4ee;letter-spacing:0.107px"><span><i></i>03 DEPOZIT 3</span></div>
<div class="c" style="left:709px;top:451px;width:127px;height:24px;background:#f6f4ee;letter-spacing:0.353px"><span><i></i>*(M)Badijonaj gingival</span></div>
<div class="c" style="left:837px;top:451px;width:99px;height:24px;background:#f6f4ee;letter-spacing:0.475px"><span><i></i>1.00</span></div>
<div class="c" style="left:937px;top:451px;width:79px;height:24px;background:#f6f4ee;letter-spacing:0.48px"><span><i></i>10.00</span></div>
<div class="c" style="left:1017px;top:451px;width:108px;height:24px;background:#f6f4ee;letter-spacing:0.4px"><span><i></i></span></div>
<div class="c" style="left:1126px;top:451px;width:114px;height:24px;background:#f6f4ee;letter-spacing:0.4px"><span><i></i></span></div>
<div class="c" style="left:1241px;top:451px;width:87px;height:24px;background:#f6f4ee;letter-spacing:0.4px"><span><i></i></span></div>
<div class="c" style="left:1329px;top:451px;width:93px;height:24px;background:#f6f4ee;letter-spacing:0.4px"><span><i></i></span></div>
<div class="c" style="left:1423px;top:451px;width:83px;height:24px;background:#f6f4ee;letter-spacing:0.4px"><span><i></i></span></div>
<div class="c" style="left:1507px;top:451px;width:92px;height:24px;background:#f6f4ee;letter-spacing:0.4px"><span></span></div>
<div class="t" style="left:1600px;top:451px;width:45px;height:24px">0.00</div>
<div class="t" style="left:1646px;top:451px;width:45px;height:24px">0.00</div>
<div class="t" style="left:1692px;top:451px;width:50px;height:24px">10.00</div>
<div class="t" style="left:1743px;top:451px;width:49px;height:24px">10.00</div>
<div class="c" style="left:7px;top:476px;width:104px;height:24px;background:#ffffff;letter-spacing:0.128px"><span><i></i>TRA18</span></div>
<div class="c" style="left:112px;top:476px;width:95px;height:24px;background:#ffffff;letter-spacing:0.578px"><span><i></i>1/12/2014<br>12:00:00 AM</span></div>
<div class="c" style="left:208px;top:476px;width:92px;height:24px;background:#ffffff;letter-spacing:0.4px"><span><i></i></span></div>
<div class="c" style="left:301px;top:476px;width:121px;height:24px;background:#ffffff;letter-spacing:0.4px"><span><i></i></span></div>
<div class="c" style="left:423px;top:476px;width:94px;height:24px;background:#ffffff;letter-spacing:0.4px"><span><i></i></span></div>
<div class="c" style="left:518px;top:476px;width:92px;height:24px;background:#ffffff;letter-spacing:0.4px"><span><i></i></span></div>
<div class="c" style="left:611px;top:476px;width:97px;height:24px;background:#ffffff;letter-spacing:0.107px"><span><i></i>03 DEPOZIT 3</span></div>
<div class="c" style="left:709px;top:476px;width:127px;height:24px;background:#ffffff;letter-spacing:0.353px"><span><i></i>*(M)Badijonaj gingival</span></div>
<div class="c" style="left:837px;top:476px;width:99px;height:24px;background:#ffffff;letter-spacing:0.475px"><span><i></i>1.00</span></div>
<div class="c" style="left:937px;top:476px;width:79px;height:24px;background:#ffffff;letter-spacing:0.48px"><span><i></i>10.00</span></div>
<div class="c" style="left:1017px;top:476px;width:108px;height:24px;background:#ffffff;letter-spacing:0.4px"><span><i></i></span></div>
<div class="c" style="left:1126px;top:476px;width:114px;height:24px;background:#ffffff;letter-spacing:0.4px"><span><i></i></span></div>
<div class="c" style="left:1241px;top:476px;width:87px;height:24px;background:#ffffff;letter-spacing:0.4px"><span><i></i></span></div>
<div class="c" style="left:1329px;top:476px;width:93px;height:24px;background:#ffffff;letter-spacing:0.4px"><span><i></i></span></div>
<div class="c" style="left:1423px;top:476px;width:83px;height:24px;background:#ffffff;letter-spacing:0.4px"><span><i></i></span></div>
<div class="c" style="left:1507px;top:476px;width:92px;height:24px;background:#ffffff;letter-spacing:0.4px"><span></span></div>
<div class="t" style="left:1600px;top:476px;width:45px;height:24px">0.00</div>
<div class="t" style="left:1646px;top:476px;width:45px;height:24px">0.00</div>
<div class="t" style="left:1692px;top:476px;width:50px;height:24px">10.00</div>
<div class="t" style="left:1743px;top:476px;width:49px;height:24px">10.00</div>
<div class="c" style="left:7px;top:501px;width:104px;height:24px;background:#f6f4ee;letter-spacing:0.128px"><span><i></i>TRA19</span></div>
<div class="c" style="left:112px;top:501px;width:95px;height:24px;background:#f6f4ee;letter-spacing:0.578px"><span><i></i>1/13/2014<br>12:00:00 AM</span></div>
<div class="c" style="left:208px;top:501px;width:92px;height:24px;background:#f6f4ee;letter-spacing:0.4px"><span><i></i></span></div>
<div class="c" style="left:301px;top:501px;width:121px;height:24px;background:#f6f4ee;letter-spacing:0.4px"><span><i></i></span></div>
<div class="c" style="left:423px;top:501px;width:94px;height:24px;background:#f6f4ee;letter-spacing:0.4px"><span><i></i></span></div>
<div class="c" style="left:518px;top:501px;width:92px;height:24px;background:#f6f4ee;letter-spacing:0.4px"><span><i></i></span></div>
<div class="c" style="left:611px;top:501px;width:97px;height:24px;background:#f6f4ee;letter-spacing:0.107px"><span><i></i>03 DEPOZIT 3</span></div>
<div class="c" style="left:709px;top:501px;width:127px;height:24px;background:#f6f4ee;letter-spacing:0.353px"><span><i></i>*(M)Badijonaj gingival</span></div>
<div class="c" style="left:837px;top:501px;width:99px;height:24px;background:#f6f4ee;letter-spacing:0.475px"><span><i></i>1.00</span></div>
<div class="c" style="left:937px;top:501px;width:79px;height:24px;background:#f6f4ee;letter-spacing:0.48px"><span><i></i>10.00</span></div>
<div class="c" style="left:1017px;top:501px;width:108px;height:24px;background:#f6f4ee;letter-spacing:0.4px"><span><i></i></span></div>
<div class="c" style="left:1126px;top:501px;width:114px;height:24px;background:#f6f4ee;letter-spacing:0.4px"><span><i></i></span></div>
<div class="c" style="left:1241px;top:501px;width:87px;height:24px;background:#f6f4ee;letter-spacing:0.4px"><span><i></i></span></div>
<div class="c" style="left:1329px;top:501px;width:93px;height:24px;background:#f6f4ee;letter-spacing:0.4px"><span><i></i></span></div>
<div class="c" style="left:1423px;top:501px;width:83px;height:24px;background:#f6f4ee;letter-spacing:0.4px"><span><i></i></span></div>
<div class="c" style="left:1507px;top:501px;width:92px;height:24px;background:#f6f4ee;letter-spacing:0.4px"><span></span></div>
<div class="t" style="left:1600px;top:501px;width:45px;height:24px">0.00</div>
<div class="t" style="left:1646px;top:501px;width:45px;height:24px">0.00</div>
<div class="t" style="left:1692px;top:501px;width:50px;height:24px">10.00</div>
<div class="t" style="left:1743px;top:501px;width:49px;height:24px">10.00</div>
<div class="c" style="left:7px;top:526px;width:104px;height:24px;background:#ffffff;letter-spacing:0.035px"><span><i></i>TRA2</span></div>
<div class="c" style="left:112px;top:526px;width:95px;height:24px;background:#ffffff;letter-spacing:0.578px"><span><i></i>3/14/2012<br>12:00:00 AM</span></div>
<div class="c" style="left:208px;top:526px;width:92px;height:24px;background:#ffffff;letter-spacing:0.107px"><span><i></i>02 DEPOZIT 2</span></div>
<div class="c" style="left:301px;top:526px;width:121px;height:24px;background:#ffffff;letter-spacing:0.357px"><span><i></i>Minciog cu plasa din<br>plastic</span></div>
<div class="c" style="left:423px;top:526px;width:94px;height:24px;background:#ffffff;letter-spacing:0.483px"><span><i></i>100.00</span></div>
<div class="c" style="left:518px;top:526px;width:92px;height:24px;background:#ffffff;letter-spacing:0.48px"><span><i></i>28.80</span></div>
<div class="c" style="left:611px;top:526px;width:97px;height:24px;background:#ffffff;letter-spacing:0.107px"><span><i></i>02 DEPOZIT 2</span></div>
<div class="c" style="left:709px;top:526px;width:127px;height:24px;background:#ffffff;letter-spacing:0.079px"><span><i></i>K-ALMA "ANTIB" 50 MG X<br>20 CPS.</span></div>
<div class="c" style="left:837px;top:526px;width:99px;height:24px;background:#ffffff;letter-spacing:0.475px"><span><i></i>1.00</span></div>
<div class="c" style="left:937px;top:526px;width:79px;height:24px;background:#ffffff;letter-spacing:0.475px"><span><i></i>2,880.00</span></div>
<div class="c" style="left:1017px;top:526px;width:108px;height:24px;background:#ffffff;letter-spacing:0.4px"><span><i></i></span></div>
<div class="c" style="left:1126px;top:526px;width:114px;height:24px;background:#ffffff;letter-spacing:0.4px"><span><i></i></span></div>
<div class="c" style="left:1241px;top:526px;width:87px;height:24px;background:#ffffff;letter-spacing:0.4px"><span><i></i></span></div>
<div class="c" style="left:1329px;top:526px;width:93px;height:24px;background:#ffffff;letter-spacing:0.4px"><span><i></i></span></div>
<div class="c" style="left:1423px;top:526px;width:83px;height:24px;background:#ffffff;letter-spacing:0.4px"><span><i></i></span></div>
<div class="c" style="left:1507px;top:526px;width:92px;height:24px;background:#ffffff;letter-spacing:0.4px"><span></span></div>
<div class="t" style="left:1600px;top:526px;width:45px;height:24px">2,880.00</div>
<div class="t" style="left:1646px;top:526px;width:45px;height:24px">2,880.00</div>
<div class="t" style="left:1692px;top:526px;width:50px;height:24px">2,880.00</div>
<div class="t" style="left:1743px;top:526px;width:49px;height:24px">2,880.00</div>
<div class="c" style="left:7px;top:551px;width:104px;height:81px;background:#f6f4ee;letter-spacing:0.128px"><span><i></i>TRA20</span></div>
<div class="c" style="left:112px;top:551px;width:95px;height:81px;background:#f6f4ee;letter-spacing:0.578px"><span><i></i>1/13/2014<br>12:00:00 AM</span></div>
<div class="c" style="left:208px;top:551px;width:92px;height:81px;background:#f6f4ee;letter-spacing:0.107px"><span><i></i>03 DEPOZIT 3</span></div>
<div class="c" style="left:301px;top:551px;width:121px;height:81px;background:#f6f4ee;letter-spacing:0.386px"><span><i></i>*Control unit for high<br>temperature furnace 1200&deg;C<br>Table-top console (WxHxT):<br>600x580x420 Type of<br>controller: Eurotherm 2216<br>No. of controllers: 3<br>Controller range: (&deg;C)<br>606527</span></div>
<div class="c" style="left:423px;top:551px;width:94px;height:81px;background:#f6f4ee;letter-spacing:0.475px"><span><i></i>1.00</span></div>
<div class="c" style="left:518px;top:551px;width:92px;height:81px;background:#f6f4ee;letter-spacing:0.48px"><span><i></i>10.00</span></div>
<div class="c" style="left:611px;top:551px;width:97px;height:81px;background:#f6f4ee;letter-spacing:0.107px"><span><i></i>03 DEPOZIT 3</span></div>
<div class="c" style="left:709px;top:551px;width:127px;height:81px;background:#f6f4ee;letter-spacing:0.353px"><span><i></i>*(M)Badijonaj gingival</span></div>
<div class="c" style="left:837px;top:551px;width:99px;height:81px;background:#f6f4ee;letter-spacing:0.475px"><span><i></i>1.00</span></div>
<div class="c" style="left:937px;top:551px;width:79px;height:81px;background:#f6f4ee;letter-spacing:0.48px"><span><i></i>10.00</span></div>
<div class="c" style="left:1017px;top:551px;width:108px;height:81px;background:#f6f4ee;letter-spacing:0.4px"><span><i></i></span></div>
<div class="c" style="left:1126px;top:551px;width:114px;height:81px;background:#f6f4ee;letter-spacing:0.4px"><span><i></i></span></div>
<div class="c" style="left:1241px;top:551px;width:87px;height:81px;background:#f6f4ee;letter-spacing:0.4px"><span><i></i></span></div>
<div class="c" style="left:1329px;top:551px;width:93px;height:81px;background:#f6f4ee;letter-spacing:0.4px"><span><i></i></span></div>
<div class="c" style="left:1423px;top:551px;width:83px;height:81px;background:#f6f4ee;letter-spacing:0.4px"><span><i></i></span></div>
<div class="c" style="left:1507px;top:551px;width:92px;height:81px;background:#f6f4ee;letter-spacing:0.4px"><span></span></div>
<div class="t" style="left:1600px;top:551px;width:45px;height:81px">10.00</div>
<div class="t" style="left:1646px;top:551px;width:45px;height:81px">10.00</div>
<div class="t" style="left:1692px;top:551px;width:50px;height:81px">10.00</div>
<div class="t" style="left:1743px;top:551px;width:49px;height:81px">10.00</div>
<div class="c" style="left:7px;top:633px;width:104px;height:24px;background:#ffffff;letter-spacing:0.128px"><span><i></i>TRA21</span></div>
<div class="c" style="left:112px;top:633px;width:95px;height:24px;background:#ffffff;letter-spacing:0.578px"><span><i></i>1/13/2014<br>12:00:00 AM</span></div>
<div class="c" style="left:208px;top:633px;width:92px;height:24px;background:#ffffff;letter-spacing:0.4px"><span><i></i></span></div>
<div class="c" style="left:301px;top:633px;width:121px;height:24px;background:#ffffff;letter-spacing:0.4px"><span><i></i></span></div>
<div class="c" style="left:423px;top:633px;width:94px;height:24px;background:#ffffff;letter-spacing:0.4px"><span><i></i></span></div>
<div class="c" style="left:518px;top:633px;width:92px;height:24px;background:#ffffff;letter-spacing:0.4px"><span><i></i></span></div>
<div class="c" style="left:611px;top:633px;width:97px;height:24px;background:#ffffff;letter-spacing:0.107px"><span><i></i>03 DEPOZIT 3</span></div>
<div class="c" style="left:709px;top:633px;width:127px;height:24px;background:#ffffff;letter-spacing:-0.025px"><span><i></i>SECTIUNI MICROSCOPICE<br>SISTEMUL NERVOS BSM15</span></div>
<div class="c" style="left:837px;top:633px;width:99px;height:24px;background:#ffffff;letter-spacing:0.475px"><span><i></i>1.00</span></div>
<div class="c" style="left:937px;top:633px;width:79px;height:24px;background:#ffffff;letter-spacing:0.483px"><span><i></i>550.00</span></div>
<div class="c" style="left:1017px;top:633px;width:108px;height:24px;background:#ffffff;letter-spacing:0.4px"><span><i></i></span></div>
<div class="c" style="left:1126px;top:633px;width:114px;height:24px;background:#ffffff;letter-spacing:0.4px"><span><i></i></span></div>
<div class="c" style="left:1241px;top:633px;width:87px;height:24px;background:#ffffff;letter-spacing:0.4px"><span><i></i></span></div>
<div class="c" style="left:1329px;top:633px;width:93px;height:24px;background:#ffffff;letter-spacing:0.4px"><span><i></i></span></div>
<div class="c" style="left:1423px;top:633px;width:83px;height:24px;background:#ffffff;letter-spacing:0.4px"><span><i></i></span></div>
<div class="c" style="left:1507px;top:633px;width:92px;height:24px;background:#ffffff;letter-spacing:0.4px"><span></span></div>
<div class="t" style="left:1600px;top:633px;width:45px;height:24px">0.00</div>
<div class="t" style="left:1646px;top:633px;width:45px;height:24px">0.00</div>
<div class="t" style="left:1692px;top:633px;width:50px;height:24px">550.00</div>
<div class="t" style="left:1743px;top:633px;width:49px;height:24px">550.00</div>
<div class="c" style="left:7px;top:658px;width:104px;height:24px;background:#f6f4ee;letter-spacing:0.128px"><span><i></i>TRA22</span></div>
<div class="c" style="left:112px;top:658px;width:95px;height:24px;background:#f6f4ee;letter-spacing:0.578px"><span><i></i>1/13/2014<br>12:00:00 AM</span></div>
<div class="c" style="left:208px;top:658px;width:92px;height:24px;background:#f6f4ee;letter-spacing:0.4px"><span><i></i></span></div>
<div class="c" style="left:301px;top:658px;width:121px;height:24px;background:#f6f4ee;letter-spacing:0.4px"><span><i></i></span></div>
<div class="c" style="left:423px;top:658px;width:94px;height:24px;background:#f6f4ee;letter-spacing:0.4px"><span><i></i></span></div>
<div class="c" style="left:518px;top:658px;width:92px;height:24px;background:#f6f4ee;letter-spacing:0.4px"><span><i></i></span></div>
<div class="c" style="left:611px;top:658px;width:97px;height:24px;background:#f6f4ee;letter-spacing:0.107px"><span><i></i>03 DEPOZIT 3</span></div>
<div class="c" style="left:709px;top:658px;width:127px;height:24px;background:#f6f4ee;letter-spacing:-0.025px"><span><i></i>SECTIUNI MICROSCOPICE<br>SISTEMUL NERVOS BSM15</span></div>
<div class="c" style="left:837px;top:658px;width:99px;height:24px;background:#f6f4ee;letter-spacing:0.475px"><span><i></i>1.00</span></div>
<div class="c" style="left:937px;top:658px;width:79px;height:24px;background:#f6f4ee;letter-spacing:0.483px"><span><i></i>550.00</span></div>
<div class="c" style="left:1017px;top:658px;width:108px;height:24px;background:#f6f4ee;letter-spacing:0.4px"><span><i></i></span></div>
<div class="c" style="left:1126px;top:658px;width:114px;height:24px;background:#f6f4ee;letter-spacing:0.4px"><span><i></i></span></div>
<div class="c" style="left:1241px;top:658px;width:87px;height:24px;background:#f6f4ee;letter-spacing:0.4px"><span><i></i></span></div>
<div class="c" style="left:1329px;top:658px;width:93px;height:24px;background:#f6f4ee;letter-spacing:0.4px"><span><i></i></span></div>
<div class="c" style="left:1423px;top:658px;width:83px;height:24px;background:#f6f4ee;letter-spacing:0.4px"><span><i></i></span></div>
<div class="c" style="left:1507px;top:658px;width:92px;height:24px;background:#f6f4ee;letter-spacing:0.4px"><span></span></div>
<div class="t" style="left:1600px;top:658px;width:45px;height:24px">0.00</div>
<div class="t" style="left:1646px;top:658px;width:45px;height:24px">0.00</div>
<div class="t" style="left:1692px;top:658px;width:50px;height:24px">550.00</div>
<div class="t" style="left:1743px;top:658px;width:49px;height:24px">550.00</div>
<div class="c" style="left:7px;top:683px;width:104px;height:24px;background:#ffffff;letter-spacing:0.128px"><span><i></i>TRA23</span></div>
<div class="c" style="left:112px;top:683px;width:95px;height:24px;background:#ffffff;letter-spacing:0.578px"><span><i></i>1/13/2014<br>12:00:00 AM</span></div>
<div class="c" style="left:208px;top:683px;width:92px;height:24px;background:#ffffff;letter-spacing:0.4px"><span><i></i></span></div>
<div class="c" style="left:301px;top:683px;width:121px;height:24px;background:#ffffff;letter-spacing:0.4px"><span><i></i></span></div>
<div class="c" style="left:423px;top:683px;width:94px;height:24px;background:#ffffff;letter-spacing:0.4px"><span><i></i></span></div>
<div class="c" style="left:518px;top:683px;width:92px;height:24px;background:#ffffff;letter-spacing:0.4px"><span><i></i></span></div>
<div class="c" style="left:611px;top:683px;width:97px;height:24px;background:#ffffff;letter-spacing:0.107px"><span><i></i>03 DEPOZIT 3</span></div>
<div class="c" style="left:709px;top:683px;width:127px;height:24px;background:#ffffff;letter-spacing:-0.025px"><span><i></i>SECTIUNI MICROSCOPICE<br>SISTEMUL NERVOS BSM15</span></div>
<div class="c" style="left:837px;top:683px;width:99px;height:24px;background:#ffffff;letter-spacing:0.475px"><span><i></i>2.00</span></div>
<div class="c" style="left:937px;top:683px;width:79px;height:24px;background:#ffffff;letter-spacing:0.483px"><span><i></i>200.00</span></div>
<div class="c" style="left:1017px;top:683px;width:108px;height:24px;background:#ffffff;letter-spacing:0.4px"><span><i></i></span></div>
<div class="c" style="left:1126px;top:683px;width:114px;height:24px;background:#ffffff;letter-spacing:0.4px"><span><i></i></span></div>
<div class="c" style="left:1241px;top:683px;width:87px;height:24px;background:#ffffff;letter-spacing:0.4px"><span><i></i></span></div>
<div class="c" style="left:1329px;top:683px;width:93px;height:24px;background:#ffffff;letter-spacing:0.4px"><span><i></i></span></div>
<div class="c" style="left:1423px;top:683px;width:83px;height:24px;background:#ffffff;letter-spacing:0.4px"><span><i></i></span></div>
<div class="c" style="left:1507px;top:683px;width:92px;height:24px;background:#ffffff;letter-spacing:0.4px"><span></span></div>
<div class="t" style="left:1600px;top:683px;width:45px;height:24px">0.00</div>
<div class="t" style="left:1646px;top:683px;width:45px;height:24px">0.00</div>
<div class="t" style="left:1692px;top:683px;width:50px;height:24px">400.00</div>
<div class="t" style="left:1743px;top:683px;width:49px;height:24px">400.00</div>
<div class="c" style="left:7px;top:708px;width:104px;height:24px;background:#f6f4ee;letter-spacing:0.128px"><span><i></i>TRA24</span></div>
<div class="c" style="left:112px;top:708px;width:95px;height:24px;background:#f6f4ee;letter-spacing:0.578px"><span><i></i>1/13/2014<br>12:00:00 AM</span></div>
<div class="c" style="left:208px;top:708px;width:92px;height:24px;background:#f6f4ee;letter-spacing:0.4px"><span><i></i></span></div>
<div class="c" style="left:301px;top:708px;width:121px;height:24px;background:#f6f4ee;letter-spacing:0.4px"><span><i></i></span></div>
<div class="c" style="left:423px;top:708px;width:94px;height:24px;background:#f6f4ee;letter-spacing:0.4px"><span><i></i></span></div>
<div class="c" style="left:518px;top:708px;width:92px;height:24px;background:#f6f4ee;letter-spacing:0.4px"><span><i></i></span></div>
<div class="c" style="left:611px;top:708px;width:97px;height:24px;background:#f6f4ee;letter-spacing:0.107px"><span><i></i>03 DEPOZIT 3</span></div>
<div class="c" style="left:709px;top:708px;width:127px;height:24px;background:#f6f4ee;letter-spacing:-0.025px"><span><i></i>SECTIUNI MICROSCOPICE<br>SISTEMUL NERVOS BSM15</span></div>
<div class="c" style="left:837px;top:708px;width:99px;height:24px;background:#f6f4ee;letter-spacing:0.48px"><span><i></i>10.00</span></div>
<div class="c" style="left:937px;top:708px;width:79px;height:24px;background:#f6f4ee;letter-spacing:0.48px"><span><i></i>55.00</span></div>
<div class="c" style="left:1017px;top:708px;width:108px;height:24px;background:#f6f4ee;letter-spacing:0.4px"><span><i></i></span></div>
<div class="c" style="left:1126px;top:708px;width:114px;height:24px;background:#f6f4ee;letter-spacing:0.4px"><span><i></i></span></div>
<div class="c" style="left:1241px;top:708px;width:87px;height:24px;background:#f6f4ee;letter-spacing:0.4px"><span><i></i></span></div>
<div class="c" style="left:1329px;top:708px;width:93px;height:24px;background:#f6f4ee;letter-spacing:0.4px"><span><i></i></span></div>
<div class="c" style="left:1423px;top:708px;width:83px;height:24px;background:#f6f4ee;letter-spacing:0.4px"><span><i></i></span></div>
<div class="c" style="left:1507px;top:708px;width:92px;height:24px;background:#f6f4ee;letter-spacing:0.4px"><span></span></div>
<div class="t" style="left:1600px;top:708px;width:45px;height:24px">0.00</div>
<div class="t" style="left:1646px;top:708px;width:45px;height:24px">0.00</div>
<div class="t" style="left:1692px;top:708px;width:50px;height:24px">550.00</div>
<div class="t" style="left:1743px;top:708px;width:49px;height:24px">550.00</div>
<div class="c" style="left:7px;top:733px;width:104px;height:24px;background:#ffffff;letter-spacing:0.128px"><span><i></i>TRA25</span></div>
<div class="c" style="left:112px;top:733px;width:95px;height:24px;background:#ffffff;letter-spacing:0.578px"><span><i></i>1/13/2014<br>12:00:00 AM</span></div>
<div class="c" style="left:208px;top:733px;width:92px;height:24px;background:#ffffff;letter-spacing:0.4px"><span><i></i></span></div>
<div class="c" style="left:301px;top:733px;width:121px;height:24px;background:#ffffff;letter-spacing:0.4px"><span><i></i></span></div>
<div class="c" style="left:423px;top:733px;width:94px;height:24px;background:#ffffff;letter-spacing:0.4px"><span><i></i></span></div>
<div class="c" style="left:518px;top:733px;width:92px;height:24px;background:#ffffff;letter-spacing:0.4px"><span><i></i></span></div>
<div class="c" style="left:611px;top:733px;width:97px;height:24px;background:#ffffff;letter-spacing:0.107px"><span><i></i>03 DEPOZIT 3</span></div>
<div class="c" style="left:709px;top:733px;width:127px;height:24px;background:#ffffff;letter-spacing:-0.025px"><span><i></i>SECTIUNI MICROSCOPICE<br>SISTEMUL NERVOS BSM15</span></div>
<div class="c" style="left:837px;top:733px;width:99px;height:24px;background:#ffffff;letter-spacing:0.48px"><span><i></i>10.00</span></div>
<div class="c" style="left:937px;top:733px;width:79px;height:24px;background:#ffffff;letter-spacing:0.48px"><span><i></i>55.00</span></div>
<div class="c" style="left:1017px;top:733px;width:108px;height:24px;background:#ffffff;letter-spacing:0.4px"><span><i></i></span></div>
<div class="c" style="left:1126px;top:733px;width:114px;height:24px;background:#ffffff;letter-spacing:0.4px"><span><i></i></span></div>
<div class="c" style="left:1241px;top:733px;width:87px;height:24px;background:#ffffff;letter-spacing:0.4px"><span><i></i></span></div>
<div class="c" style="left:1329px;top:733px;width:93px;height:24px;background:#ffffff;letter-spacing:0.4px"><span><i></i></span></div>
<div class="c" style="left:1423px;top:733px;width:83px;height:24px;background:#ffffff;letter-spacing:0.4px"><span><i></i></span></div>
<div class="c" style="left:1507px;top:733px;width:92px;height:24px;background:#ffffff;letter-spacing:0.4px"><span></span></div>
<div class="t" style="left:1600px;top:733px;width:45px;height:24px">0.00</div>
<div class="t" style="left:1646px;top:733px;width:45px;height:24px">0.00</div>
<div class="t" style="left:1692px;top:733px;width:50px;height:24px">550.00</div>
<div class="t" style="left:1743px;top:733px;width:49px;height:24px">550.00</div>
<div class="c" style="left:7px;top:758px;width:104px;height:24px;background:#f6f4ee;letter-spacing:0.128px"><span><i></i>TRA26</span></div>
<div class="c" style="left:112px;top:758px;width:95px;height:24px;background:#f6f4ee;letter-spacing:0.578px"><span><i></i>1/13/2014<br>12:00:00 AM</span></div>
<div class="c" style="left:208px;top:758px;width:92px;height:24px;background:#f6f4ee;letter-spacing:0.4px"><span><i></i></span></div>
<div class="c" style="left:301px;top:758px;width:121px;height:24px;background:#f6f4ee;letter-spacing:0.4px"><span><i></i></span></div>
<div class="c" style="left:423px;top:758px;width:94px;height:24px;background:#f6f4ee;letter-spacing:0.4px"><span><i></i></span></div>
<div class="c" style="left:518px;top:758px;width:92px;height:24px;background:#f6f4ee;letter-spacing:0.4px"><span><i></i></span></div>
<div class="c" style="left:611px;top:758px;width:97px;height:24px;background:#f6f4ee;letter-spacing:0.107px"><span><i></i>03 DEPOZIT 3</span></div>
<div class="c" style="left:709px;top:758px;width:127px;height:24px;background:#f6f4ee;letter-spacing:-0.025px"><span><i></i>SECTIUNI MICROSCOPICE<br>SISTEMUL NERVOS BSM15</span></div>
<div class="c" style="left:837px;top:758px;width:99px;height:24px;background:#f6f4ee;letter-spacing:0.48px"><span><i></i>10.00</span></div>
<div class="c" style="left:937px;top:758px;width:79px;height:24px;background:#f6f4ee;letter-spacing:0.48px"><span><i></i>55.00</span></div>
<div class="c" style="left:1017px;top:758px;width:108px;height:24px;background:#f6f4ee;letter-spacing:0.4px"><span><i></i></span></div>
<div class="c" style="left:1126px;top:758px;width:114px;height:24px;background:#f6f4ee;letter-spacing:0.4px"><span><i></i></span></div>
<div class="c" style="left:1241px;top:758px;width:87px;height:24px;background:#f6f4ee;letter-spacing:0.4px"><span><i></i></span></div>
<div class="c" style="left:1329px;top:758px;width:93px;height:24px;background:#f6f4ee;letter-spacing:0.4px"><span><i></i></span></div>
<div class="c" style="left:1423px;top:758px;width:83px;height:24px;background:#f6f4ee;letter-spacing:0.4px"><span><i></i></span></div>
<div class="c" style="left:1507px;top:758px;width:92px;height:24px;background:#f6f4ee;letter-spacing:0.4px"><span></span></div>
<div class="t" style="left:1600px;top:758px;width:45px;height:24px">0.00</div>
<div class="t" style="left:1646px;top:758px;width:45px;height:24px">0.00</div>
<div class="t" style="left:1692px;top:758px;width:50px;height:24px">550.00</div>
<div class="t" style="left:1743px;top:758px;width:49px;height:24px">550.00</div>
<div class="c" style="left:7px;top:783px;width:104px;height:24px;background:#ffffff;letter-spacing:0.128px"><span><i></i>TRA27</span></div>
<div class="c" style="left:112px;top:783px;width:95px;height:24px;background:#ffffff;letter-spacing:0.578px"><span><i></i>1/13/2014<br>12:00:00 AM</span></div>
<div class="c" style="left:208px;top:783px;width:92px;height:24px;background:#ffffff;letter-spacing:0.4px"><span><i></i></span></div>
<div class="c" style="left:301px;top:783px;width:121px;height:24px;background:#ffffff;letter-spacing:0.4px"><span><i></i></span></div>
<div class="c" style="left:423px;top:783px;width:94px;height:24px;background:#ffffff;letter-spacing:0.4px"><span><i></i></span></div>
<div class="c" style="left:518px;top:783px;width:92px;height:24px;background:#ffffff;letter-spacing:0.4px"><span><i></i></span></div>
<div class="c" style="left:611px;top:783px;width:97px;height:24px;background:#ffffff;letter-spacing:0.107px"><span><i></i>03 DEPOZIT 3</span></div>
<div class="c" style="left:709px;top:783px;width:127px;height:24px;background:#ffffff;letter-spacing:-0.025px"><span><i></i>SECTIUNI MICROSCOPICE<br>SISTEMUL NERVOS BSM15</span></div>
<div class="c" style="left:837px;top:783px;width:99px;height:24px;background:#ffffff;letter-spacing:0.475px"><span><i></i>1.00</span></div>
<div class="c" style="left:937px;top:783px;width:79px;height:24px;background:#ffffff;letter-spacing:0.483px"><span><i></i>550.00</span></div>
<div class="c" style="left:1017px;top:783px;width:108px;height:24px;background:#ffffff;letter-spacing:0.4px"><span><i></i></span></div>
<div class="c" style="left:1126px;top:783px;width:114px;height:24px;background:#ffffff;letter-spacing:0.4px"><span><i></i></span></div>
<div class="c" style="left:1241px;top:783px;width:87px;height:24px;background:#ffffff;letter-spacing:0.4px"><span><i></i></span></div>
<div class="c" style="left:1329px;top:783px;width:93px;height:24px;background:#ffffff;letter-spacing:0.4px"><span><i></i></span></div>
<div class="c" style="left:1423px;top:783px;width:83px;height:24px;background:#ffffff;letter-spacing:0.4px"><span><i></i></span></div>
<div class="c" style="left:1507px;top:783px;width:92px;height:24px;background:#ffffff;letter-spacing:0.4px"><span></span></div>
<div class="t" style="left:1600px;top:783px;width:45px;height:24px">0.00</div>
<div class="t" style="left:1646px;top:783px;width:45px;height:24px">0.00</div>
<div class="t" style="left:1692px;top:783px;width:50px;height:24px">550.00</div>
<div class="t" style="left:1743px;top:783px;width:49px;height:24px">550.00</div>
<div class="c" style="left:7px;top:808px;width:104px;height:92px;background:#f6f4ee;letter-spacing:0.128px"><span><i></i>TRA28</span></div>
<div class="c" style="left:112px;top:808px;width:95px;height:63px;background:#f6f4ee;letter-spacing:0.578px"><span><i></i>1/13/2014<br>12:00:00 AM</span></div>
<div class="c" style="left:208px;top:808px;width:92px;height:47px;background:#f6f4ee;letter-spacing:0.107px"><span><i></i>03 DEPOZIT 3</span></div>
<div class="c" style="left:301px;top:808px;width:121px;height:24px;background:#f6f4ee;letter-spacing:0.29px"><span><i></i>22" TFT LCD Widescreen<br>Monitor 89-0176-04</span></div>
<div class="c" style="left:301px;top:833px;width:121px;height:24px;background:#ffffff;letter-spacing:0.4px"><span><i></i></span></div>
<div class="c" style="left:423px;top:808px;width:94px;height:24px;background:#f6f4ee;letter-spacing:0.475px"><span><i></i>1.00</span></div>
<div class="c" style="left:423px;top:833px;width:94px;height:24px;background:#ffffff;letter-spacing:0.4px"><span><i></i></span></div>
<div class="c" style="left:518px;top:808px;width:92px;height:24px;background:#f6f4ee;letter-spacing:0.483px"><span><i></i>500.00</span></div>
<div class="c" style="left:518px;top:833px;width:92px;height:24px;background:#ffffff;letter-spacing:0.4px"><span><i></i></span></div>
<div class="c" style="left:611px;top:808px;width:97px;height:24px;background:#f6f4ee;letter-spacing:0.107px"><span><i></i>03 DEPOZIT 3</span></div>
<div class="c" style="left:611px;top:833px;width:97px;height:24px;background:#ffffff;letter-spacing:0.4px"><span><i></i></span></div>
<div class="c" style="left:709px;top:808px;width:127px;height:24px;background:#f6f4ee;letter-spacing:-0.025px"><span><i></i>SECTIUNI MICROSCOPICE<br>SISTEMUL NERVOS BSM15</span></div>
<div class="c" style="left:709px;top:833px;width:127px;height:24px;background:#ffffff;letter-spacing:0.4px"><span><i></i></span></div>
<div class="c" style="left:837px;top:808px;width:99px;height:24px;background:#f6f4ee;letter-spacing:0.475px"><span><i></i>1.00</span></div>
<div class="c" style="left:837px;top:833px;width:99px;height:24px;background:#ffffff;letter-spacing:0.4px"><span><i></i></span></div>
<div class="c" style="left:937px;top:808px;width:79px;height:24px;background:#f6f4ee;letter-spacing:0.483px"><span><i></i>550.00</span></div>
<div class="c" style="left:937px;top:833px;width:79px;height:24px;background:#ffffff;letter-spacing:0.4px"><span><i></i></span></div>
<div class="c" style="left:1017px;top:808px;width:108px;height:24px;background:#f6f4ee;letter-spacing:0.4px"><span><i></i></span></div>
<div class="c" style="left:1017px;top:833px;width:108px;height:24px;background:#ffffff;letter-spacing:0.4px"><span><i></i></span></div>
<div class="c" style="left:1126px;top:808px;width:114px;height:24px;background:#f6f4ee;letter-spacing:0.4px"><span><i></i></span></div>
<div class="c" style="left:1126px;top:833px;width:114px;height:24px;background:#ffffff;letter-spacing:0.4px"><span><i></i></span></div>
<div class="c" style="left:1241px;top:808px;width:87px;height:24px;background:#f6f4ee;letter-spacing:0.4px"><span><i></i></span></div>
<div class="c" style="left:1241px;top:833px;width:87px;height:24px;background:#ffffff;letter-spacing:0.4px"><span><i></i></span></div>
<div class="c" style="left:1329px;top:808px;width:93px;height:24px;background:#f6f4ee;letter-spacing:0.4px"><span><i></i></span></div>
<div class="c" style="left:1329px;top:833px;width:93px;height:24px;background:#ffffff;letter-spacing:0.4px"><span><i></i></span></div>
<div class="c" style="left:1423px;top:808px;width:83px;height:24px;background:#f6f4ee;letter-spacing:0.4px"><span><i></i></span></div>
<div class="c" style="left:1423px;top:833px;width:83px;height:24px;background:#ffffff;letter-spacing:0.4px"><span><i></i></span></div>
<div class="c" style="left:1507px;top:808px;width:92px;height:24px;background:#f6f4ee;letter-spacing:0.4px"><span></span></div>
<div class="c" style="left:1507px;top:833px;width:92px;height:24px;background:#ffffff;letter-spacing:0.4px"><span></span></div>
<div class="t" style="left:1600px;top:808px;width:45px;height:24px">500.00</div>
<div class="t" style="left:1646px;top:808px;width:45px;height:24px">500.00</div>
<div class="t" style="left:1692px;top:808px;width:50px;height:24px">550.00</div>
<div class="t" style="left:1743px;top:808px;width:49px;height:24px">550.00</div>
<div class="t" style="left:1600px;top:833px;width:45px;height:24px"></div>
<div class="t" style="left:1646px;top:833px;width:45px;height:24px"></div>
<div class="t" style="left:1692px;top:833px;width:50px;height:24px"></div>
<div class="t" style="left:1743px;top:833px;width:49px;height:24px"></div>
<div id="gtop"></div>
<div class="abs" style="left:1792px;top:46px;width:1px;height:788px;background:#a9b0b6"></div>
<div class="abs" style="left:1795px;top:20px;width:2px;height:814px;background:rgba(255,255,255,0.3)"></div>

<div id="popup">
<div id="ptitle">PivotGrid Field List<span id="pclose"></span></div>
<div class="pi" style="top:20px">Agent</div>
<div class="pi" style="top:38px">Categorie produs iesire</div>
<div class="pi" style="top:56px">Categorie produs intrare</div>
<div class="pi" style="top:75px">Client iesire</div>
<div class="pi" style="top:93px">Cod gestiune iesire</div>
<div class="pi" style="top:111px">Cod gestiune intrare</div>
<div class="pi" style="top:129px">Data fabricare produs</div>
<div class="pi" style="top:148px">Data fabricare produs intrare</div>
<div class="pi" style="top:166px">Data intrare</div>
<div class="pi" style="top:184px">Data validare document</div>
<div class="pi" style="top:202px">Furnizor</div>
<div class="pi" style="top:221px">Judet agent</div>
<div class="pi" style="top:239px">Lot / Serie intrare</div>
<div class="pi" style="top:257px">Lot / Serie la iesire</div>
<div class="pi" style="top:275px">Numar intrare</div>
<div class="pi" style="top:293px">Observaţii</div>
<div class="pi" style="top:312px">Portofoliu produs</div>
<div class="pi" style="top:330px">Pozitii iesire</div>
<div class="pi" style="top:348px">Tva</div>
<div class="pi" style="top:366px">UM</div>
</div>
</body></html>
